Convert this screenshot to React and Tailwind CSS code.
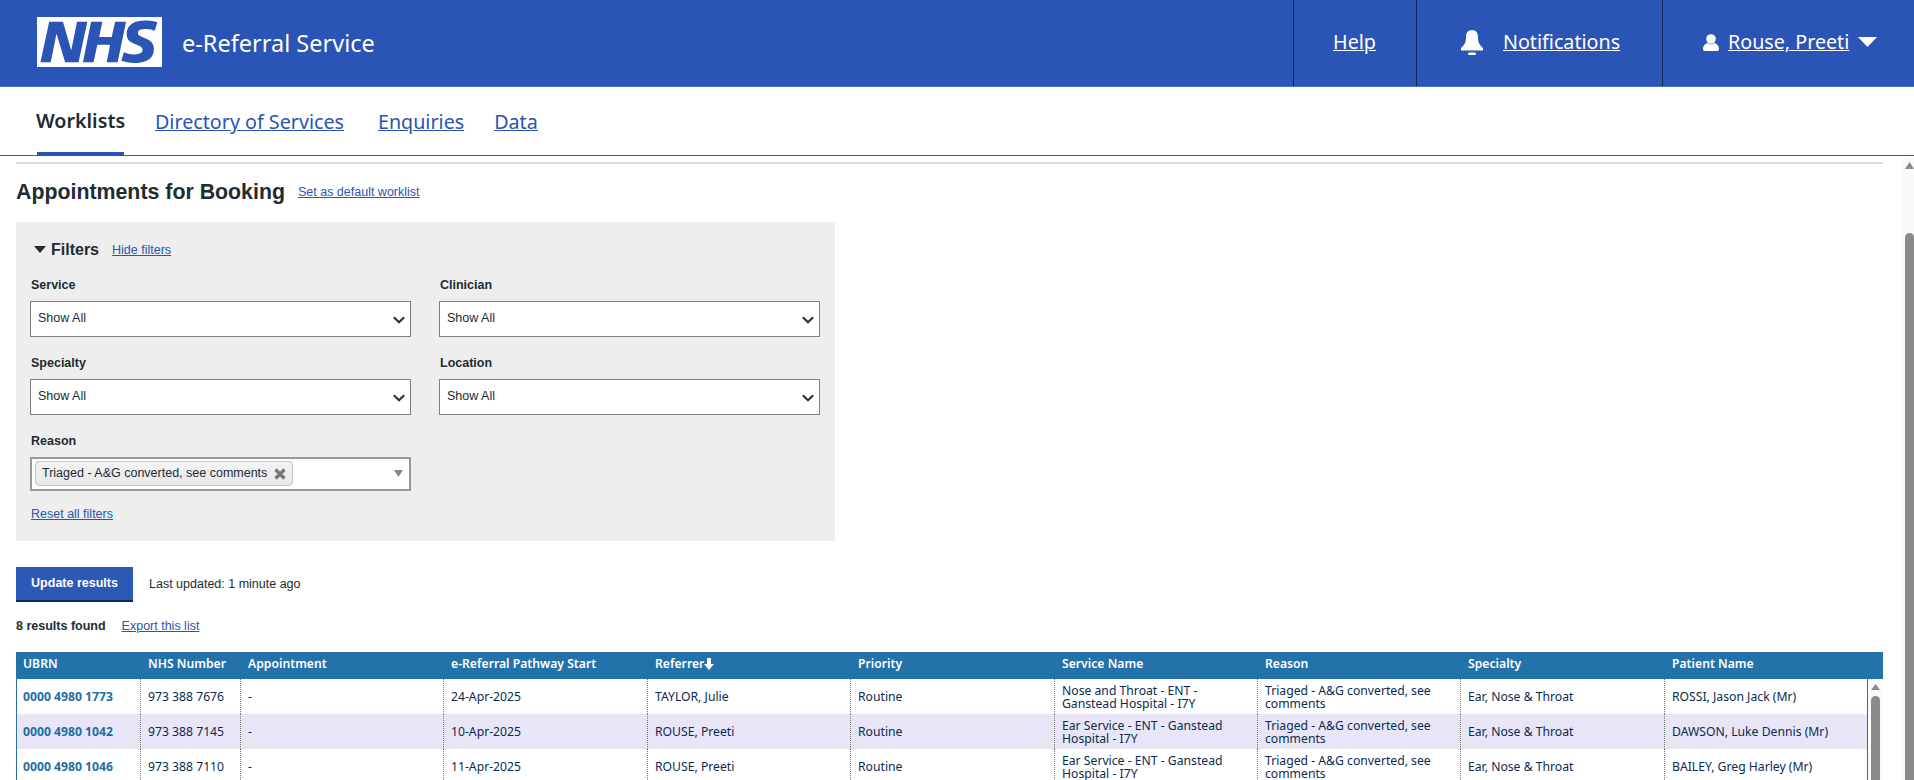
const columns = "grid-cols-[124px_100px_203px_204px_203px_204px_203px_203px_204px_203px]";
const frutiger = "font-['Noto_Sans',sans-serif]";
const arial = "font-['Liberation_Sans',Arial,sans-serif]";

const headers = ["UBRN", "NHS Number", "Appointment", "e-Referral Pathway Start", "Referrer", "Priority", "Service Name", "Reason", "Specialty", "Patient Name"];

const rows = [
  { ubrn: "0000 4980 1773", nhs: "973 388 7676", start: "24-Apr-2025", referrer: "TAYLOR, Julie", service: "Nose and Throat - ENT - Ganstead Hospital - I7Y", patient: "ROSSI, Jason Jack (Mr)" },
  { ubrn: "0000 4980 1042", nhs: "973 388 7145", start: "10-Apr-2025", referrer: "ROUSE, Preeti", service: "Ear Service - ENT - Ganstead Hospital - I7Y", patient: "DAWSON, Luke Dennis (Mr)" },
  { ubrn: "0000 4980 1046", nhs: "973 388 7110", start: "11-Apr-2025", referrer: "ROUSE, Preeti", service: "Ear Service - ENT - Ganstead Hospital - I7Y", patient: "BAILEY, Greg Harley (Mr)" },
];

function NhsLogo() {
  return (
    <svg viewBox="0 0 40 16" className="w-[125px] h-[50px] block -mt-[2px]">
      <path fill="#fff" d="M0 0h40v16H0z" />
      <path fill="#2a54b5" d="M3.9 1.5h4.4l2.6 9h.1l1.8-9h3.3l-2.8 13H9l-2.7-9h-.1l-1.8 9H1.1M17.3 1.5h3.6l-1 4.9h4L25 1.5h3.5l-2.7 13h-3.5l1.1-5.6h-4.1l-1.2 5.600h-3.4M37.7 4.4c-.7-.3-1.6-.6-2.9-.6-1.4 0-2.5.2-2.5 1.3 0 1.8 5.1 1.2 5.1 5.1 0 3.6-3.3 4.5-6.4 4.500-1.3 0-2.900-.3-4-.7l.8-2.7c.7.4 2.100.7 3.200.7s2.800-.2 2.800-1.500c0-2.100-5.100-1.300-5.100-5 0-3.400 2.900-4.400 5.800-4.400 1.600 0 3.100.2 4 .6" />
    </svg>
  );
}

function BellIcon() {
  return (
    <svg viewBox="0 0 22 25" className="w-[22px] h-[25px]" fill="#fff">
      <path d="M11 0C7.500 0 5 2.800 5 6.500 5 12 4 14.500 0 18v2.500h22V18c-4-3.500-5-6-5-11.500C17 2.800 14.500 0 11 0z" />
      <rect x="7" y="22.600" width="8" height="2.400" rx="1.200" />
    </svg>
  );
}

function UserIcon() {
  return (
    <svg viewBox="0 0 16 17" className="w-[16px] h-[17px]" fill="#fff">
      <circle cx="8" cy="5" r="4.800" />
      <path d="M0 15c0-3.500 2-5.500 4.800-6 1.700 1.700 4.700 1.700 6.400 0C14 9.500 16 11.500 16 15c0 1.400-1 2-2 2H2c-1 0-2-.6-2-2z" />
    </svg>
  );
}

function Chevron() {
  return (
    <svg viewBox="0 0 12 8" className="w-[12px] h-[8px] mt-[2px]">
      <path d="M.8 1.200L6 6.200l5.200-5" fill="none" stroke="#333" strokeWidth="2.200" />
    </svg>
  );
}

function SelectBox({ label }) {
  return (
    <div>
      <div className="text-[12.500px] leading-[14px] font-bold text-[#212b32] mb-[9px] ml-px">{label}</div>
      <div className="h-[36px] bg-white border border-[#808080] flex items-center justify-between pl-[7px] pr-[5px]">
        <span className="text-[12.500px] text-[#212b32]">Show All</span>
        <Chevron />
      </div>
    </div>
  );
}

function Link({ children, className = "" }) {
  return <a className={`text-[12.500px] text-[#2a54b5] underline ${className}`}>{children}</a>;
}

function Cell({ children, first }) {
  return (
    <div className={`flex items-center pr-[14px] leading-[13px] ${first ? "pl-[6px]" : "pl-[7px] border-l border-dotted border-[#777]"}`}>
      {children}
    </div>
  );
}

export default function App() {
  return (
    <div className={`h-[780px] overflow-hidden flex flex-col bg-white ${arial}`}>
      <header className={`h-[87px] shrink-0 bg-[#2a54b5] border-b border-[#4a6fc4] flex items-stretch text-white ${frutiger}`}>
        <div className="pl-[37px] flex items-center gap-[20px]">
          <NhsLogo />
          <span className="text-[23.500px] mt-[2px]">e-Referral Service</span>
        </div>
        <nav className="ml-auto flex items-stretch text-[19.700px]">
          <div className="w-[123px] border-l border-[#12264f] flex items-center justify-center pr-[1px] pb-[2px]">
            <a className="underline">Help</a>
          </div>
          <div className="w-[246px] border-l border-[#12264f] flex items-center pl-[44px] gap-[20px] pb-[2px]">
            <BellIcon />
            <a className="underline">Notifications</a>
          </div>
          <div className="w-[252px] border-l border-[#12264f] flex items-center pl-[40px] gap-[9px] pb-[2px]">
            <UserIcon />
            <a className="underline">Rouse, Preeti</a>
            <svg viewBox="0 0 19 10" className="w-[19px] h-[10px]"><path d="M0 0h19l-9.500 10z" fill="#fff" /></svg>
          </div>
        </nav>
      </header>

      <nav className={`h-[69px] shrink-0 border-b border-[#4c6272] flex items-stretch pl-[37px] text-[19.700px] ${frutiger}`}>
        <div className="w-[87px] border-b-4 border-[#2a54b5] flex items-center justify-center font-semibold text-[#212b32] -mb-px pt-[3px]">Worklists</div>
        <a className="ml-[31px] self-center underline text-[#2a54b5] mt-px">Directory of Services</a>
        <a className="ml-[34px] self-center underline text-[#2a54b5] mt-px">Enquiries</a>
        <a className="ml-[30px] self-center underline text-[#2a54b5] mt-px">Data</a>
      </nav>

      <div className="flex-1 min-h-0 flex">
        <main className="w-[1902px] pl-[16px] pt-[6px]">
          <div className="h-[2px] w-[1867px] bg-[#dddddd]" />

          <div className="flex items-center gap-[13px] mt-[16px]">
            <h1 className="text-[21.330px] leading-[24px] font-bold text-[#212b32]">Appointments for Booking</h1>
            <Link>Set as default worklist</Link>
          </div>

          <section className="w-[819px] h-[319px] bg-[#eeeeee] mt-[18px] px-[14px] pt-[19px]">
            <div className="flex items-center">
              <svg viewBox="0 0 12 7" className="w-[12px] h-[7px] ml-[4px] mr-[5px] -mt-[2px]"><path d="M0 0h12L6 7z" fill="#212b32" /></svg>
              <span className="text-[16px] leading-[18px] font-bold text-[#212b32]">Filters</span>
              <Link className="ml-[13px]">Hide filters</Link>
            </div>
            <div className="grid grid-cols-[381px_381px] gap-x-[28px] gap-y-[19px] mt-[18px]">
              <SelectBox label="Service" />
              <SelectBox label="Clinician" />
              <SelectBox label="Specialty" />
              <SelectBox label="Location" />
              <div>
                <div className="text-[12.500px] leading-[14px] font-bold text-[#212b32] mb-[9px] ml-px">Reason</div>
                <div className="h-[34px] bg-white border-2 border-[#999999] flex items-center justify-between pl-[3px] pr-[6px]">
                  <span className="h-[25px] w-[258px] bg-gradient-to-b from-[#f4f4f4] to-[#e8e8e8] border border-[#c4c4c4] rounded-[4px] flex items-center justify-between pl-[6px] pr-[6px] text-[12.500px] text-[#212b32]">
                    Triaged - A&amp;G converted, see comments
                    <svg viewBox="0 0 12 12" className="w-[12px] h-[12px]"><path d="M1.500 1.500l9 9M10.500 1.500l-9 9" stroke="#777" strokeWidth="3.200" /></svg>
                  </span>
                  <svg viewBox="0 0 9 7" className="w-[9px] h-[7px]"><path d="M0 0h9L4.500 7z" fill="#888" /></svg>
                </div>
              </div>
            </div>
            <Link className="block mt-[14px] ml-px">Reset all filters</Link>
          </section>

          <div className="flex items-center mt-[26px]">
            <button className="w-[117px] h-[35px] bg-[#2a5ab5] border-b-2 border-[#0b2a4f] text-white text-[12.500px] font-bold">Update results</button>
            <span className="ml-[16px] text-[12.500px] text-[#212b32]">Last updated: 1 minute ago</span>
          </div>

          <div className="flex items-center gap-[16px] mt-[17px] text-[12.500px] leading-[14px]">
            <span className="font-bold text-[#212b32]">8 results found</span>
            <Link>Export this list</Link>
          </div>

          <div className={`w-[1867px] mt-[19px] text-[12.200px] ${frutiger}`}>
            <div className={`grid ${columns} h-[27px] bg-[#2372aa] text-white font-semibold items-center pb-[3px]`}>
              {headers.map((h, i) => (
                <div key={h} className={`flex items-center ${i === 0 ? "pl-[7px]" : "pl-[8px]"}`}>
                  {h}
                  {h === "Referrer" && (
                    <svg viewBox="0 0 10 12" className="w-[10px] h-[12px]"><path d="M3 0h4v6h3l-5 6-5-6h3z" fill="#fff" /></svg>
                  )}
                </div>
              ))}
            </div>
            <div className="flex">
              <div className="w-[1852px] border-x border-[#2372aa] text-[#0b2a4f]">
                {rows.map((r, i) => (
                  <div key={r.ubrn} className={`grid grid-cols-[123px_100px_203px_204px_203px_204px_203px_203px_204px_203px] h-[35px] ${i % 2 === 1 ? "bg-[#e8e6f6]" : "bg-white"}`}>
                    <Cell first><span className="font-bold text-[#1f6ea5]">{r.ubrn}</span></Cell>
                    <Cell>{r.nhs}</Cell>
                    <Cell>-</Cell>
                    <Cell>{r.start}</Cell>
                    <Cell>{r.referrer}</Cell>
                    <Cell>Routine</Cell>
                    <Cell>{r.service}</Cell>
                    <Cell>Triaged - A&amp;G converted, see comments</Cell>
                    <Cell>Ear, Nose &amp; Throat</Cell>
                    <Cell>{r.patient}</Cell>
                  </div>
                ))}
              </div>
              <div className="w-[15px] bg-[#fafafa] flex flex-col items-center pt-[5px]">
                <svg viewBox="0 0 9 6" className="w-[9px] h-[6px]"><path d="M4.500 0L9 6H0z" fill="#8a8a8a" /></svg>
                <div className="w-[9px] h-[90px] mt-[6px] rounded-full bg-[#8a8a8a]" />
              </div>
            </div>
          </div>
        </main>

        <div className="w-[12px] bg-[#fafafa] flex flex-col items-end pt-[6px]">
          <svg viewBox="0 0 9 7" className="w-[9px] h-[7px]"><path d="M4.500 0L9 7H0z" fill="#8a8a8a" /></svg>
          <div className="w-[9px] flex-1 mt-[64px] -mb-[10px] rounded-full bg-[#8a8a8a]" />
        </div>
      </div>
    </div>
  );
}
